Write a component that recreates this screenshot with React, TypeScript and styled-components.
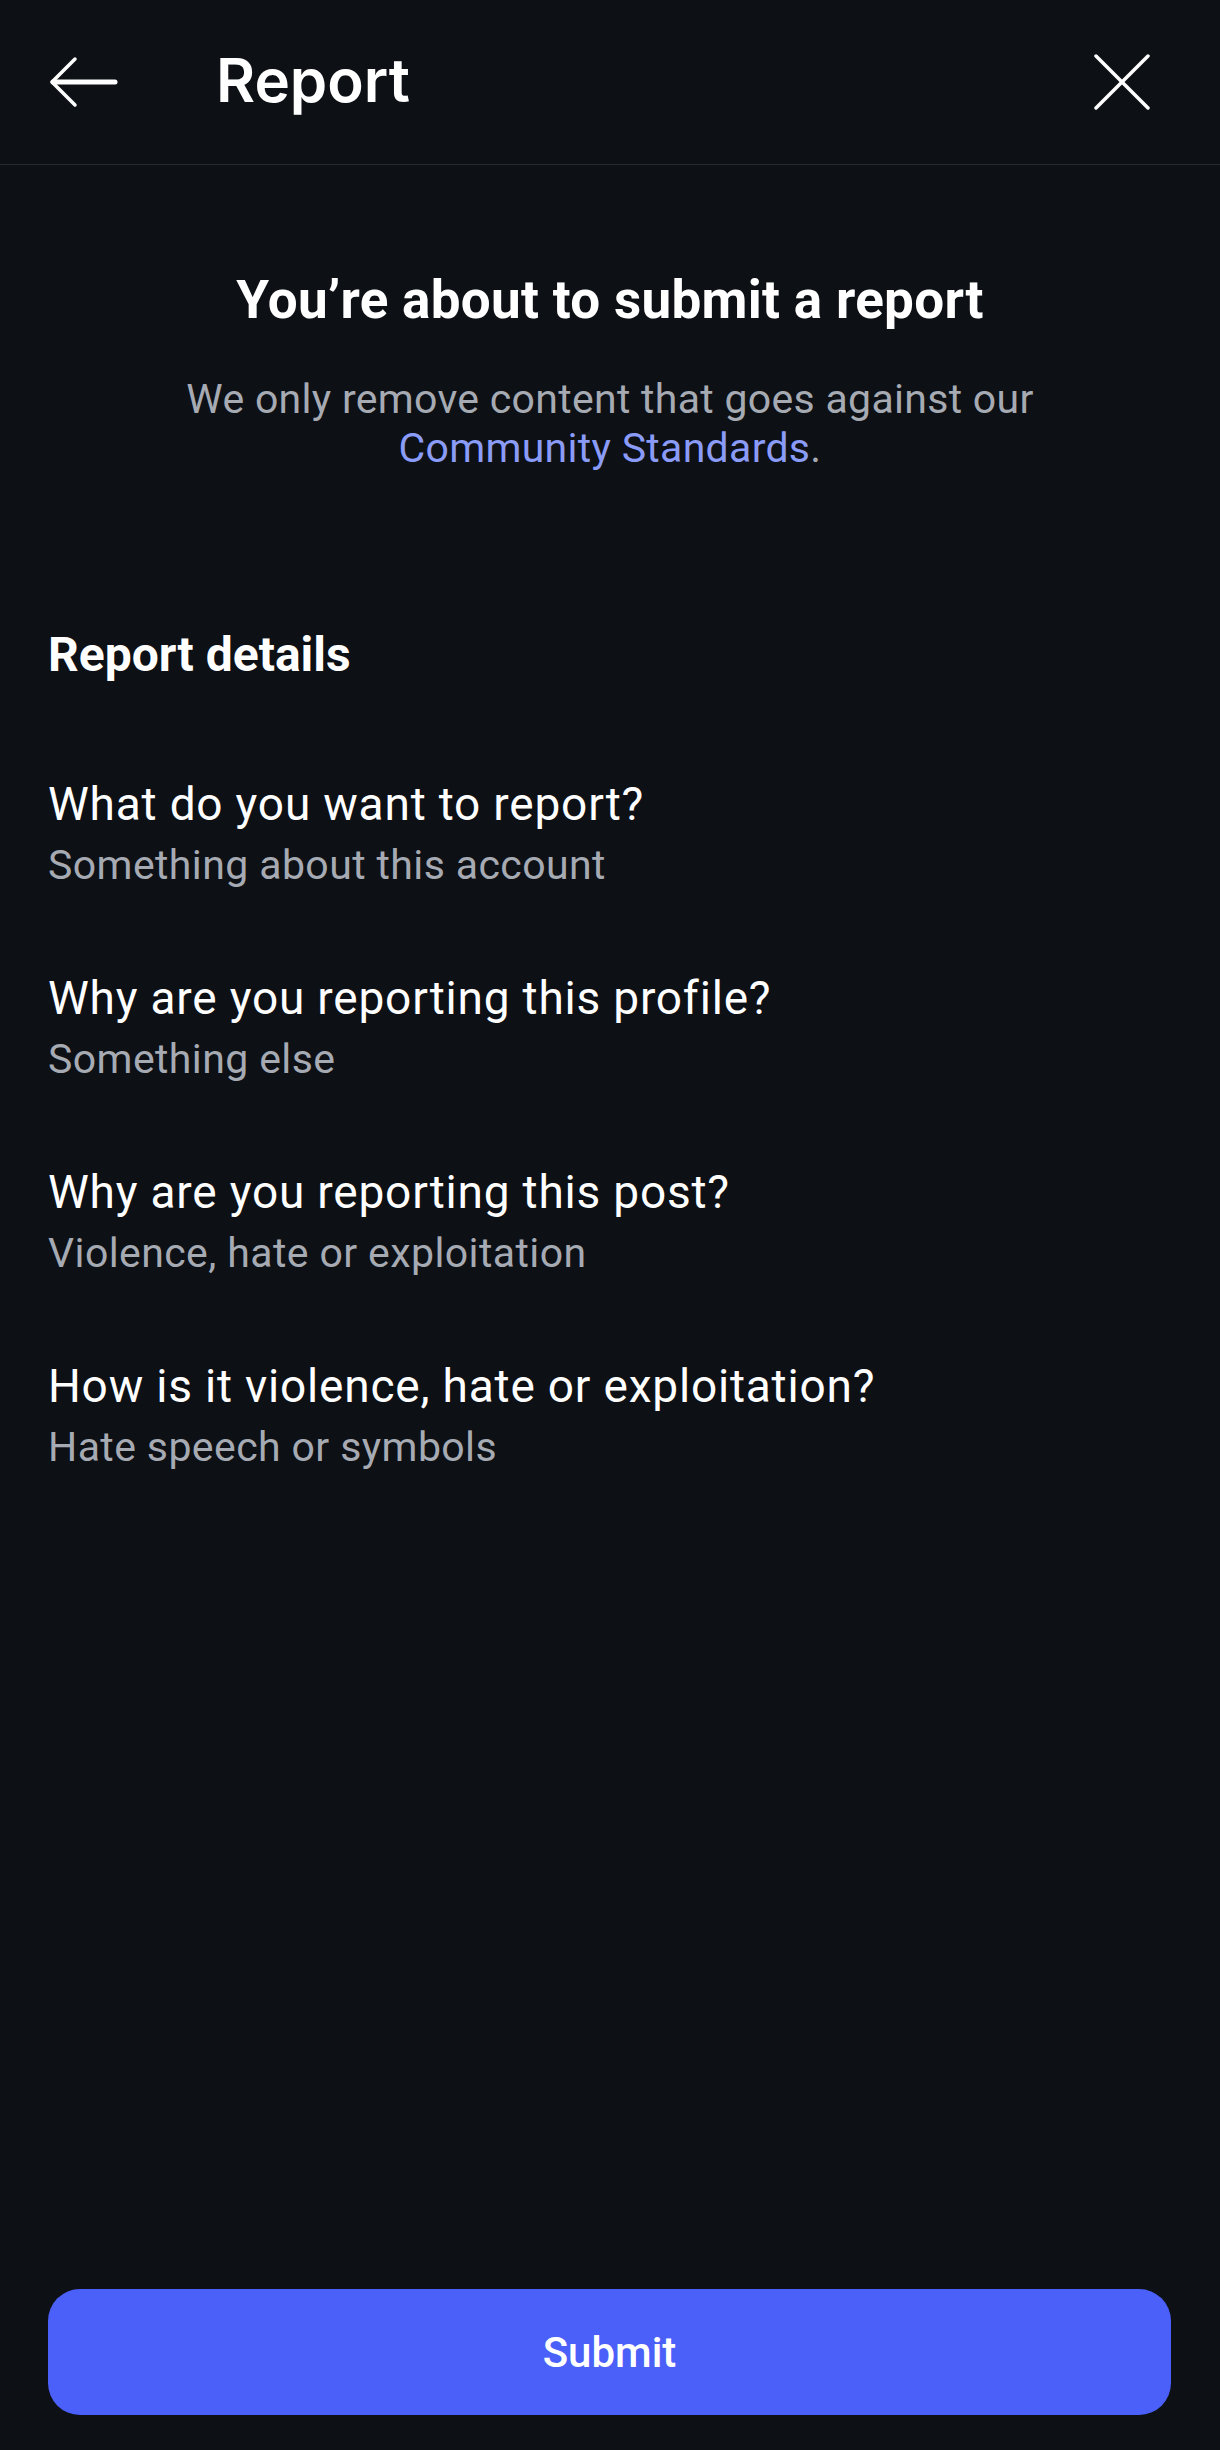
import React from 'react';
import styled, { createGlobalStyle } from 'styled-components';

const GlobalStyle = createGlobalStyle`
  html, body {
    margin: 0;
    padding: 0;
    background: #0d1015;
  }
  body {
    font-family: Roboto, "Liberation Sans", sans-serif;
    color: #ffffff;
  }
`;

const Page = styled.div`
  min-height: 2450px;
  display: flex;
  flex-direction: column;
  background: #0d1015;
`;

const Header = styled.header`
  height: 164px;
  display: flex;
  align-items: center;
  padding: 0 70px 0 49px;
  border-bottom: 1px solid #25282e;
`;

const IconButton = styled.button`
  background: none;
  border: none;
  padding: 0;
  display: flex;
  align-items: center;
  justify-content: center;
  color: #ffffff;
  cursor: pointer;
`;

const HeaderTitle = styled.h1`
  margin: 0 0 0 97px;
  flex: 1;
  font-family: Inter, Roboto, sans-serif;
  font-weight: 600;
  font-size: 60px;
  letter-spacing: 0;
  line-height: 1;
  padding-bottom: 4px;
`;

const Intro = styled.section`
  margin-top: 104px;
  display: flex;
  flex-direction: column;
  align-items: center;
  text-align: center;
  padding: 0 48px;
`;

const IntroTitle = styled.h2`
  margin: 0;
  font-size: 53px;
  line-height: 62px;
  font-weight: 700;
  letter-spacing: 0.3px;
`;

const IntroText = styled.p`
  margin: 44px 0 0;
  font-size: 41px;
  line-height: 49px;
  letter-spacing: 0.3px;
  color: #a6aab3;
  max-width: 900px;
`;

const Link = styled.a`
  color: #8a9cf7;
  text-decoration: none;
`;

const Details = styled.section`
  margin-top: 154px;
  padding: 0 48px;
  display: flex;
  flex-direction: column;
`;

const SectionHeading = styled.h3`
  margin: 0 0 94px;
  font-size: 48px;
  line-height: 56px;
  font-weight: 700;
`;

const Row = styled.div`
  display: flex;
  flex-direction: column;
  gap: 11px;
  margin-bottom: 83px;
`;

const RowTitle = styled.div`
  font-size: 46px;
  line-height: 54px;
  letter-spacing: 0.8px;
  color: #ffffff;
`;

const RowValue = styled.div`
  font-size: 41px;
  line-height: 46px;
  letter-spacing: 0.4px;
  color: #a6aab3;
`;

const Footer = styled.div`
  margin-top: auto;
  padding: 0 49px 35px 48px;
`;

const SubmitButton = styled.button`
  width: 100%;
  height: 126px;
  border: none;
  border-radius: 32px;
  background: #4b5ff9;
  color: #ffffff;
  font-family: Roboto, sans-serif;
  font-size: 42px;
  font-weight: 500;
  cursor: pointer;
`;

const details = [
  { q: 'What do you want to report?', a: 'Something about this account' },
  { q: 'Why are you reporting this profile?', a: 'Something else' },
  { q: 'Why are you reporting this post?', a: 'Violence, hate or exploitation' },
  { q: 'How is it violence, hate or exploitation?', a: 'Hate speech or symbols' },
];

const BackIcon = () => (
  <svg width="70" height="52" viewBox="0 0 70 52" fill="none" stroke="currentColor" strokeLinecap="round" strokeLinejoin="round">
    <path d="M4 26 H66" strokeWidth="5" />
    <path d="M26 3 L3 26 L26 49" strokeWidth="3.5" />
  </svg>
);

const CloseIcon = () => (
  <svg width="56" height="56" viewBox="0 0 56 56" fill="none" stroke="currentColor" strokeWidth="3.5" strokeLinecap="round">
    <path d="M2 2 L54 54" />
    <path d="M54 2 L2 54" />
  </svg>
);

export default function App() {
  return (
    <>
      <GlobalStyle />
      <Page>
        <Header>
          <IconButton aria-label="Back">
            <BackIcon />
          </IconButton>
          <HeaderTitle>Report</HeaderTitle>
          <IconButton aria-label="Close">
            <CloseIcon />
          </IconButton>
        </Header>

        <Intro>
          <IntroTitle>You’re about to submit a report</IntroTitle>
          <IntroText>
            We only remove content that goes against our{' '}
            <Link href="#">Community Standards</Link>.
          </IntroText>
        </Intro>

        <Details>
          <SectionHeading>Report details</SectionHeading>
          {details.map((d) => (
            <Row key={d.q}>
              <RowTitle>{d.q}</RowTitle>
              <RowValue>{d.a}</RowValue>
            </Row>
          ))}
        </Details>

        <Footer>
          <SubmitButton>Submit</SubmitButton>
        </Footer>
      </Page>
    </>
  );
}
